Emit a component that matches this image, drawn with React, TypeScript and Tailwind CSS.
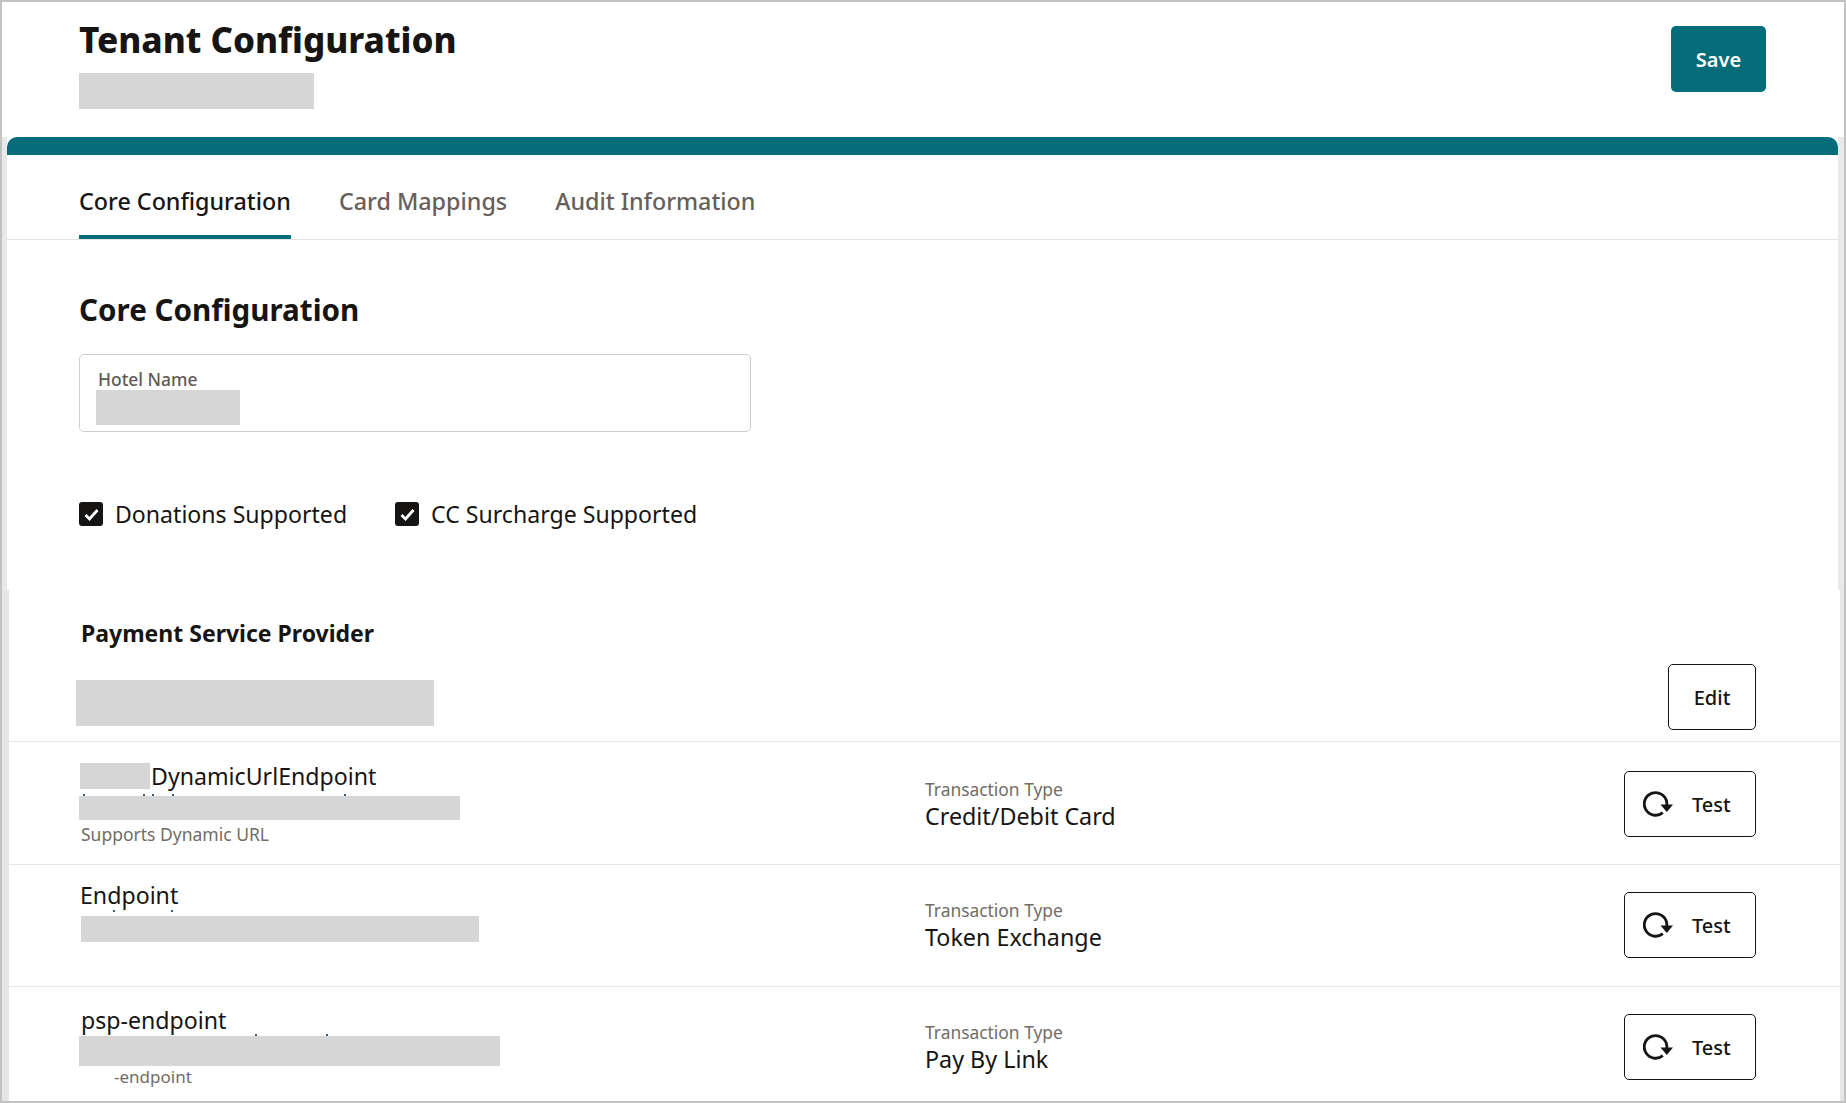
function Redacted({ className, specks = [], speckClass = "-top-[2px]" }: { className: string; specks?: number[]; speckClass?: string }) {
  return (
    <div className={"relative bg-[#d6d6d6] " + className}>
      {specks.map((x) => (
        <span key={x} className={"absolute h-[2px] w-[2px] bg-[#3a5a78] " + speckClass} style={{ left: x }} />
      ))}
    </div>
  );
}

function RefreshIcon() {
  return (
    <svg width="30" height="26" viewBox="0 0 30 26" fill="none">
      <path d="M23.8 14V11.5A11.3 11.3 0 1 0 19.8 21.6" stroke="#161513" strokeWidth="2.8" />
      <path d="M17.5 13.5h12.5l-6.2 7.5z" fill="#161513" />
    </svg>
  );
}

function Checkbox({ label }: { label: string }) {
  return (
    <label className="flex items-center">
      <span className="flex h-6 w-6 items-center justify-center rounded-[3px] bg-[#161513]">
        <svg width="15" height="13" viewBox="0 0 15 13" fill="none">
          <path d="M1.5 7L5.5 11L13.5 2" stroke="#fff" strokeWidth="2.8" />
        </svg>
      </span>
      <span className="ml-[12px] text-[23.1px] leading-[30px] text-[#161513]">{label}</span>
    </label>
  );
}

function TestButton() {
  return (
    <button className="flex h-[66px] w-[132px] items-center rounded-[5px] border border-[#161513] pl-[18px] text-[20px] font-medium text-[#161513]">
      <RefreshIcon />
      <span className="ml-[19px] pt-[2px]">Test</span>
    </button>
  );
}

function TransactionType({ value }: { value: string }) {
  return (
    <div>
      <div className="text-[17.4px] leading-[26px] text-[#716c68]">Transaction Type</div>
      <div className="text-[23.3px] leading-[28px] text-[#161513]">{value}</div>
    </div>
  );
}

export default function App() {
  return (
    <div className="h-[1103px] w-[1846px] overflow-hidden border-2 border-[#c2c2c2] bg-white font-['Noto_Sans',sans-serif] text-[#161513]">
      <header className="flex h-[135px] justify-between pl-[77px] pr-[78px]">
        <div className="pt-[14px]">
          <h1 className="text-[35px] font-extrabold leading-[47px]">Tenant Configuration</h1>
          <Redacted className="mt-[10px] h-[36px] w-[235px]" />
        </div>
        <button className="mt-[24px] h-[66px] w-[95px] rounded-[5px] bg-[#056c7a] pt-[2px] text-[20px] font-semibold text-white">Save</button>
      </header>

      <section className="h-[453px] border-l-[5px] border-r-[6px] border-[#e9e9e9]">
        <div className="h-[18px] rounded-t-[10px] bg-[#056c7a]" />
        <nav className="flex h-[85px] items-end gap-[48px] border-b border-[#e4e4e4] pl-[72px] text-[23.3px] font-medium">
          <div className="flex h-[80px] items-center border-b-[4px] border-[#056c7a] pt-[8px] text-[#161513]">Core Configuration</div>
          <div className="flex h-[80px] items-center pt-[4px] text-[#665f5b]">Card Mappings</div>
          <div className="flex h-[80px] items-center pt-[4px] text-[#665f5b]">Audit Information</div>
        </nav>
        <div className="pl-[72px] pt-[51px]">
          <h2 className="text-[29.6px] font-bold leading-[38px]">Core Configuration</h2>
          <div className="mt-[25px] h-[78px] w-[672px] rounded-[5px] border border-[#cfcfcf] pl-[16px] pt-[13px]">
            <div className="pl-[2px] text-[17.4px] font-medium leading-[22px] text-[#5f5a56]">Hotel Name</div>
            <Redacted className="h-[35px] w-[144px]" />
          </div>
          <div className="mt-[67px] flex gap-[48px]">
            <Checkbox label="Donations Supported" />
            <Checkbox label="CC Surcharge Supported" />
          </div>
        </div>
      </section>

      <section className="h-[511px] border-l-[7px] border-r-[4px] border-[#e6e6e6]">
        <div className="flex h-[152px] justify-between border-b border-[#e6e6e6] pr-[84px]">
          <div className="pt-[28px]">
            <h3 className="pl-[72px] text-[23px] font-bold leading-[30px]">Payment Service Provider</h3>
            <Redacted className="ml-[67px] mt-[32px] h-[46px] w-[358px]" />
          </div>
          <button className="mt-[74px] h-[66px] w-[88px] rounded-[5px] border border-[#161513] pt-[1px] text-[20px] font-medium">Edit</button>
        </div>

        <div className="flex h-[123px] items-start border-b border-[#e6e6e6] pr-[84px]">
          <div className="w-[916px] pl-[71px] pt-[21px]">
            <div className="flex items-center text-[23.15px] leading-[26px]">
              <Redacted className="h-[26px] w-[70px]" />
              <span className="ml-px">DynamicUrlEndpoint</span>
            </div>
            <Redacted className="-ml-px mt-[7px] h-[24px] w-[381px]" specks={[4, 64, 73, 93, 265]} />
            <div className="pl-[1px] pt-[2px] text-[17.5px] leading-[24px] text-[#716c68]">Supports Dynamic URL</div>
          </div>
          <div className="flex-1 pt-[34px]"><TransactionType value="Credit/Debit Card" /></div>
          <div className="pt-[29px]"><TestButton /></div>
        </div>

        <div className="flex h-[122px] items-start border-b border-[#e6e6e6] pr-[84px]">
          <div className="w-[916px] pl-[71px] pt-[16px]">
            <div className="text-[23.15px] leading-[28px]">Endpoint</div>
            <Redacted className="ml-px mt-[7px] h-[26px] w-[398px]" specks={[32, 90]} speckClass="-top-[6px]" />
          </div>
          <div className="flex-1 pt-[32px]"><TransactionType value="Token Exchange" /></div>
          <div className="pt-[27px]"><TestButton /></div>
        </div>

        <div className="flex items-start pr-[84px]">
          <div className="w-[916px] pl-[72px] pt-[19px]">
            <div className="text-[23.15px] leading-[28px]">psp-endpoint</div>
            <Redacted className="-ml-[2px] mt-[2px] h-[30px] w-[421px]" specks={[176, 247]} />
            <div className="-mt-px pl-[33px] text-[17px] leading-[24px] text-[#716c68]">-endpoint</div>
          </div>
          <div className="flex-1 pt-[32px]"><TransactionType value="Pay By Link" /></div>
          <div className="pt-[27px]"><TestButton /></div>
        </div>
      </section>
    </div>
  );
}
